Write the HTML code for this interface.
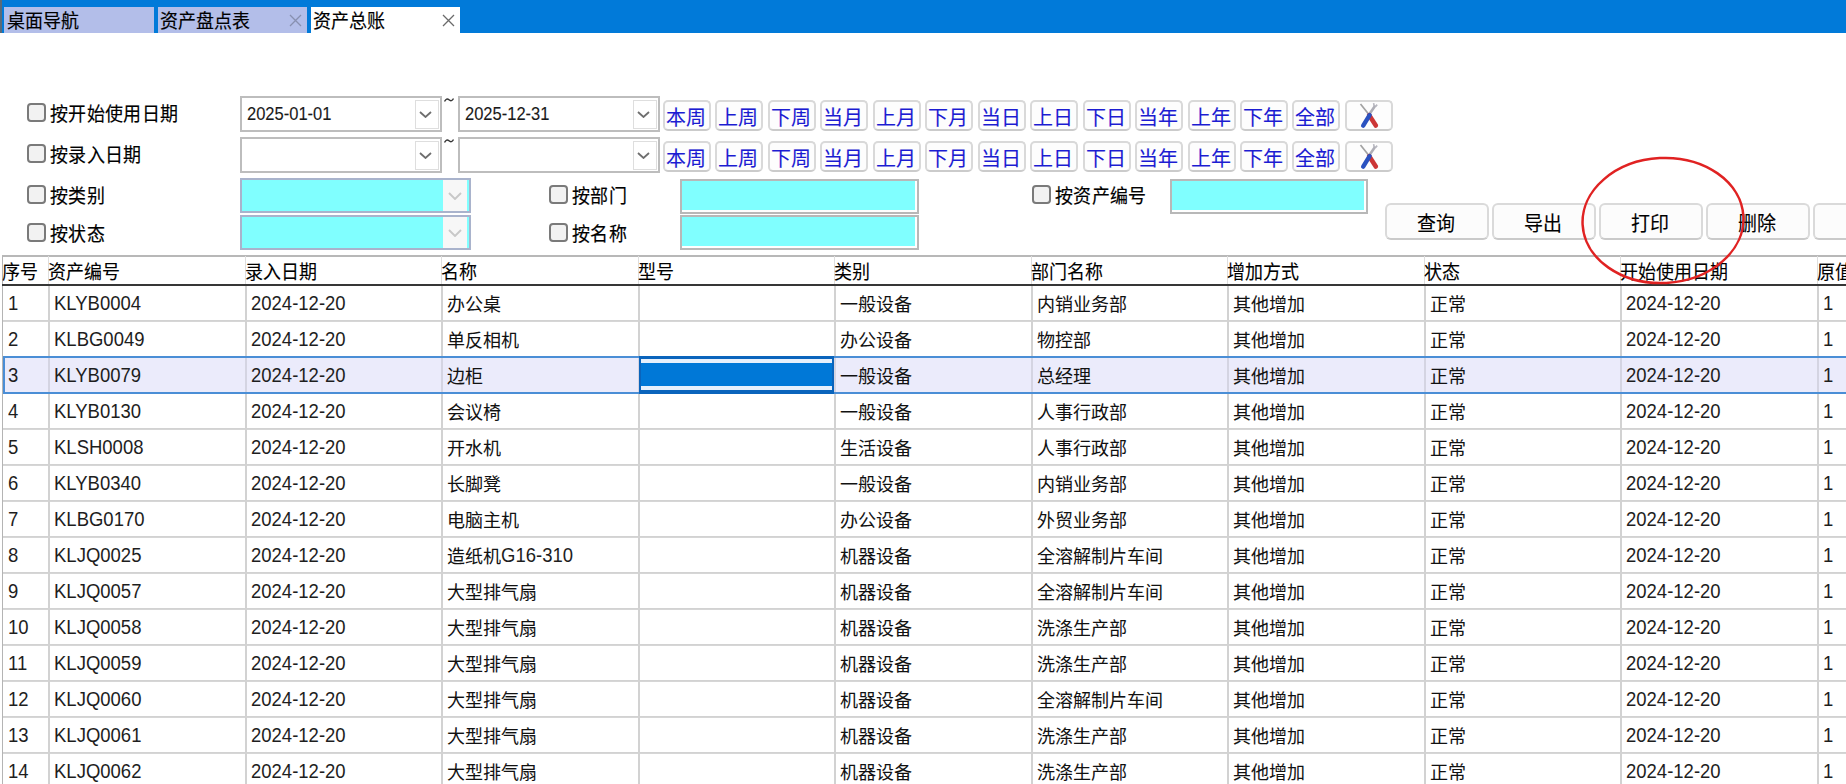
<!DOCTYPE html><html lang="zh-CN"><head><meta charset="utf-8"><style>
*{box-sizing:border-box}
html,body{margin:0;padding:0}
body{width:1846px;height:784px;overflow:hidden;background:#fff;position:relative;
 font-family:"Liberation Sans",sans-serif;font-size:18px;color:#000}
.a{position:absolute}
.t{position:absolute;white-space:nowrap;line-height:20px;height:20px}
.cb{position:absolute;width:19px;height:19px;border:2px solid #7a7a7a;border-radius:4px;background:#f2f2f2}
.combo{position:absolute;height:36px;border:2px solid #bdbdbd;background:#fff}
.dd{position:absolute;border:1px solid #dedede;background:#fff}
.btn{position:absolute;width:48px;height:31px;border:2px solid #d9d9d9;border-bottom-color:#cbcbcb;border-radius:5px;background:#fdfdfd}
.qb{position:absolute;width:104px;height:37px;border:2px solid #dadada;border-bottom-color:#cacaca;border-radius:6px;background:#fcfcfc}
.hl{position:absolute;height:1px;background:#d2d2d2}
.hl2{position:absolute;height:1px;background:#d6d6d6}
.vl{position:absolute;width:2px;background:#d2d2d2}
</style></head><body>
<div class="a" style="left:0;top:0;width:1846px;height:33px;background:#017ad9"></div>
<div class="a" style="left:0;top:0;width:2px;height:33px;background:#5a6a78"></div>
<div class="a" style="left:4px;top:7px;width:150px;height:26px;background:#b3bee9"></div>
<div class="a" style="left:158px;top:7px;width:149px;height:26px;background:#b3bee9"></div>
<div class="a" style="left:311px;top:7px;width:149px;height:26px;background:#fff"></div>
<div class="t" style="left:7px;top:11px;font-size:18px;transform:scaleY(1.06);transform-origin:0 0;-webkit-text-stroke:0.15px currentColor">桌面导航</div>
<div class="t" style="left:160px;top:11px;font-size:18px;transform:scaleY(1.06);transform-origin:0 0;-webkit-text-stroke:0.15px currentColor">资产盘点表</div>
<div class="t" style="left:313px;top:11px;font-size:18px;transform:scaleY(1.06);transform-origin:0 0;-webkit-text-stroke:0.15px currentColor">资产总账</div>
<svg class="a" style="left:289px;top:14px" width="13" height="13" viewBox="0 0 13 13"><path d="M1 1L12 12M12 1L1 12" stroke="#8890b0" stroke-width="1.3" fill="none"/></svg>
<svg class="a" style="left:442px;top:14px" width="13" height="13" viewBox="0 0 13 13"><path d="M1 1L12 12M12 1L1 12" stroke="#6a6a6a" stroke-width="1.3" fill="none"/></svg>
<div class="cb" style="left:27px;top:103px"></div>
<div class="t" style="left:50px;top:103px;font-size:18px;transform:scaleY(1.1);transform-origin:0 0;letter-spacing:0.35px;-webkit-text-stroke:0.15px currentColor">按开始使用日期</div>
<div class="cb" style="left:27px;top:144px"></div>
<div class="t" style="left:50px;top:144px;font-size:18px;transform:scaleY(1.1);transform-origin:0 0;letter-spacing:0.35px;-webkit-text-stroke:0.15px currentColor">按录入日期</div>
<div class="cb" style="left:27px;top:185px"></div>
<div class="t" style="left:50px;top:185px;font-size:18px;transform:scaleY(1.1);transform-origin:0 0;letter-spacing:0.35px;-webkit-text-stroke:0.15px currentColor">按类别</div>
<div class="cb" style="left:27px;top:223px"></div>
<div class="t" style="left:50px;top:223px;font-size:18px;transform:scaleY(1.1);transform-origin:0 0;letter-spacing:0.35px;-webkit-text-stroke:0.15px currentColor">按状态</div>
<div class="cb" style="left:549px;top:185px"></div>
<div class="t" style="left:572px;top:185px;font-size:18px;transform:scaleY(1.1);transform-origin:0 0;letter-spacing:0.35px;-webkit-text-stroke:0.15px currentColor">按部门</div>
<div class="cb" style="left:549px;top:223px"></div>
<div class="t" style="left:572px;top:223px;font-size:18px;transform:scaleY(1.1);transform-origin:0 0;letter-spacing:0.35px;-webkit-text-stroke:0.15px currentColor">按名称</div>
<div class="cb" style="left:1032px;top:185px"></div>
<div class="t" style="left:1055px;top:185px;font-size:18px;transform:scaleY(1.1);transform-origin:0 0;letter-spacing:0.35px;-webkit-text-stroke:0.15px currentColor">按资产编号</div>
<div class="combo" style="left:240px;top:96px;width:202px"></div>
<div class="dd" style="left:415px;top:100px;width:24px;height:29px"></div>
<svg class="a" style="left:419px;top:111px" width="13" height="7" viewBox="0 0 13 7"><path d="M1 1L6.5 6L12 1" stroke="#6e6e6e" stroke-width="1.8" fill="none"/></svg>
<div class="t" style="left:247px;top:102px;font-size:16.5px;transform:scaleY(1.1);transform-origin:0 0;-webkit-text-stroke:0.1px currentColor;color:#1a1a1a">2025-01-01</div>
<div class="combo" style="left:458px;top:96px;width:202px"></div>
<div class="dd" style="left:633px;top:100px;width:24px;height:29px"></div>
<svg class="a" style="left:637px;top:111px" width="13" height="7" viewBox="0 0 13 7"><path d="M1 1L6.5 6L12 1" stroke="#6e6e6e" stroke-width="1.8" fill="none"/></svg>
<div class="t" style="left:465px;top:102px;font-size:16.5px;transform:scaleY(1.1);transform-origin:0 0;-webkit-text-stroke:0.1px currentColor;color:#1a1a1a">2025-12-31</div>
<svg class="a" style="left:444px;top:97px" width="10" height="6" viewBox="0 0 10 6"><path d="M0.5 4.5Q2.5 0.5 5 2.8T9.5 1.5" stroke="#333" stroke-width="1.4" fill="none"/></svg>
<div class="combo" style="left:240px;top:137px;width:202px"></div>
<div class="dd" style="left:415px;top:141px;width:24px;height:29px"></div>
<svg class="a" style="left:419px;top:152px" width="13" height="7" viewBox="0 0 13 7"><path d="M1 1L6.5 6L12 1" stroke="#6e6e6e" stroke-width="1.8" fill="none"/></svg>
<div class="combo" style="left:458px;top:137px;width:202px"></div>
<div class="dd" style="left:633px;top:141px;width:24px;height:29px"></div>
<svg class="a" style="left:637px;top:152px" width="13" height="7" viewBox="0 0 13 7"><path d="M1 1L6.5 6L12 1" stroke="#6e6e6e" stroke-width="1.8" fill="none"/></svg>
<svg class="a" style="left:444px;top:138px" width="10" height="6" viewBox="0 0 10 6"><path d="M0.5 4.5Q2.5 0.5 5 2.8T9.5 1.5" stroke="#333" stroke-width="1.4" fill="none"/></svg>
<div class="btn" style="left:663px;top:100px"></div>
<div class="t" style="left:666px;top:108px;font-size:20px;-webkit-text-stroke:0.1px currentColor;color:#1c1cd2">本周</div>
<div class="btn" style="left:715px;top:100px"></div>
<div class="t" style="left:718px;top:108px;font-size:20px;-webkit-text-stroke:0.1px currentColor;color:#1c1cd2">上周</div>
<div class="btn" style="left:768px;top:100px"></div>
<div class="t" style="left:771px;top:108px;font-size:20px;-webkit-text-stroke:0.1px currentColor;color:#1c1cd2">下周</div>
<div class="btn" style="left:820px;top:100px"></div>
<div class="t" style="left:823px;top:108px;font-size:20px;-webkit-text-stroke:0.1px currentColor;color:#1c1cd2">当月</div>
<div class="btn" style="left:873px;top:100px"></div>
<div class="t" style="left:876px;top:108px;font-size:20px;-webkit-text-stroke:0.1px currentColor;color:#1c1cd2">上月</div>
<div class="btn" style="left:925px;top:100px"></div>
<div class="t" style="left:928px;top:108px;font-size:20px;-webkit-text-stroke:0.1px currentColor;color:#1c1cd2">下月</div>
<div class="btn" style="left:978px;top:100px"></div>
<div class="t" style="left:981px;top:108px;font-size:20px;-webkit-text-stroke:0.1px currentColor;color:#1c1cd2">当日</div>
<div class="btn" style="left:1030px;top:100px"></div>
<div class="t" style="left:1033px;top:108px;font-size:20px;-webkit-text-stroke:0.1px currentColor;color:#1c1cd2">上日</div>
<div class="btn" style="left:1083px;top:100px"></div>
<div class="t" style="left:1086px;top:108px;font-size:20px;-webkit-text-stroke:0.1px currentColor;color:#1c1cd2">下日</div>
<div class="btn" style="left:1135px;top:100px"></div>
<div class="t" style="left:1138px;top:108px;font-size:20px;-webkit-text-stroke:0.1px currentColor;color:#1c1cd2">当年</div>
<div class="btn" style="left:1188px;top:100px"></div>
<div class="t" style="left:1191px;top:108px;font-size:20px;-webkit-text-stroke:0.1px currentColor;color:#1c1cd2">上年</div>
<div class="btn" style="left:1240px;top:100px"></div>
<div class="t" style="left:1243px;top:108px;font-size:20px;-webkit-text-stroke:0.1px currentColor;color:#1c1cd2">下年</div>
<div class="btn" style="left:1292px;top:100px"></div>
<div class="t" style="left:1295px;top:108px;font-size:20px;-webkit-text-stroke:0.1px currentColor;color:#1c1cd2">全部</div>
<div class="btn" style="left:1345px;top:100px"></div>
<svg class="a" style="left:1359px;top:102px" width="22" height="27" viewBox="0 0 22 27">
<path d="M1.5 2 L9.5 12" stroke="#a2a2a2" stroke-width="1.7" fill="none"/>
<path d="M16.3 3.5 L10.5 12" stroke="#aeaeb6" stroke-width="2.6" fill="none"/>
<path d="M14.6 1.2 L15.2 4.2 M18.2 2.6 L16.4 4.6" stroke="#b8b8c0" stroke-width="1.6" fill="none"/>
<path d="M10.2 13.2 L16.8 23.6" stroke="#cc3636" stroke-width="4.6" stroke-linecap="round" fill="none"/>
<path d="M10.6 13.2 L4.2 23.6" stroke="#2a52c0" stroke-width="4.4" stroke-linecap="round" fill="none"/>
</svg>
<div class="btn" style="left:663px;top:141px"></div>
<div class="t" style="left:666px;top:149px;font-size:20px;-webkit-text-stroke:0.1px currentColor;color:#1c1cd2">本周</div>
<div class="btn" style="left:715px;top:141px"></div>
<div class="t" style="left:718px;top:149px;font-size:20px;-webkit-text-stroke:0.1px currentColor;color:#1c1cd2">上周</div>
<div class="btn" style="left:768px;top:141px"></div>
<div class="t" style="left:771px;top:149px;font-size:20px;-webkit-text-stroke:0.1px currentColor;color:#1c1cd2">下周</div>
<div class="btn" style="left:820px;top:141px"></div>
<div class="t" style="left:823px;top:149px;font-size:20px;-webkit-text-stroke:0.1px currentColor;color:#1c1cd2">当月</div>
<div class="btn" style="left:873px;top:141px"></div>
<div class="t" style="left:876px;top:149px;font-size:20px;-webkit-text-stroke:0.1px currentColor;color:#1c1cd2">上月</div>
<div class="btn" style="left:925px;top:141px"></div>
<div class="t" style="left:928px;top:149px;font-size:20px;-webkit-text-stroke:0.1px currentColor;color:#1c1cd2">下月</div>
<div class="btn" style="left:978px;top:141px"></div>
<div class="t" style="left:981px;top:149px;font-size:20px;-webkit-text-stroke:0.1px currentColor;color:#1c1cd2">当日</div>
<div class="btn" style="left:1030px;top:141px"></div>
<div class="t" style="left:1033px;top:149px;font-size:20px;-webkit-text-stroke:0.1px currentColor;color:#1c1cd2">上日</div>
<div class="btn" style="left:1083px;top:141px"></div>
<div class="t" style="left:1086px;top:149px;font-size:20px;-webkit-text-stroke:0.1px currentColor;color:#1c1cd2">下日</div>
<div class="btn" style="left:1135px;top:141px"></div>
<div class="t" style="left:1138px;top:149px;font-size:20px;-webkit-text-stroke:0.1px currentColor;color:#1c1cd2">当年</div>
<div class="btn" style="left:1188px;top:141px"></div>
<div class="t" style="left:1191px;top:149px;font-size:20px;-webkit-text-stroke:0.1px currentColor;color:#1c1cd2">上年</div>
<div class="btn" style="left:1240px;top:141px"></div>
<div class="t" style="left:1243px;top:149px;font-size:20px;-webkit-text-stroke:0.1px currentColor;color:#1c1cd2">下年</div>
<div class="btn" style="left:1292px;top:141px"></div>
<div class="t" style="left:1295px;top:149px;font-size:20px;-webkit-text-stroke:0.1px currentColor;color:#1c1cd2">全部</div>
<div class="btn" style="left:1345px;top:141px"></div>
<svg class="a" style="left:1359px;top:143px" width="22" height="27" viewBox="0 0 22 27">
<path d="M1.5 2 L9.5 12" stroke="#a2a2a2" stroke-width="1.7" fill="none"/>
<path d="M16.3 3.5 L10.5 12" stroke="#aeaeb6" stroke-width="2.6" fill="none"/>
<path d="M14.6 1.2 L15.2 4.2 M18.2 2.6 L16.4 4.6" stroke="#b8b8c0" stroke-width="1.6" fill="none"/>
<path d="M10.2 13.2 L16.8 23.6" stroke="#cc3636" stroke-width="4.6" stroke-linecap="round" fill="none"/>
<path d="M10.6 13.2 L4.2 23.6" stroke="#2a52c0" stroke-width="4.4" stroke-linecap="round" fill="none"/>
</svg>
<div class="a" style="left:240px;top:178px;width:231px;height:35px;border:2px solid #a9b3cc;background:#80ffff"></div>
<div class="a" style="left:443px;top:180px;width:24px;height:31px;background:#f7f7f7"></div>
<svg class="a" style="left:448px;top:192px" width="14" height="8" viewBox="0 0 14 8"><path d="M1 1L7.0 7L13 1" stroke="#c8c8c8" stroke-width="1.9" fill="none"/></svg>
<div class="a" style="left:240px;top:215px;width:231px;height:35px;border:2px solid #a9b3cc;background:#80ffff"></div>
<div class="a" style="left:443px;top:217px;width:24px;height:31px;background:#f7f7f7"></div>
<svg class="a" style="left:448px;top:229px" width="14" height="8" viewBox="0 0 14 8"><path d="M1 1L7.0 7L13 1" stroke="#c8c8c8" stroke-width="1.9" fill="none"/></svg>
<div class="a" style="left:680px;top:179px;width:239px;height:35px;border:2px solid #b8b8b8"><div class="a" style="left:0;top:0;right:2px;bottom:2px;background:#80ffff"></div></div>
<div class="a" style="left:680px;top:215px;width:239px;height:35px;border:2px solid #b8b8b8"><div class="a" style="left:0;top:0;right:2px;bottom:2px;background:#80ffff"></div></div>
<div class="a" style="left:1170px;top:179px;width:198px;height:35px;border:2px solid #b8b8b8"><div class="a" style="left:0;top:0;right:2px;bottom:2px;background:#80ffff"></div></div>
<div class="qb" style="left:1385px;top:203px"></div>
<div class="t" style="left:1417px;top:214px;font-size:19px;transform:scaleY(1.06);transform-origin:0 0;-webkit-text-stroke:0.1px currentColor">查询</div>
<div class="qb" style="left:1492px;top:203px"></div>
<div class="t" style="left:1524px;top:214px;font-size:19px;transform:scaleY(1.06);transform-origin:0 0;-webkit-text-stroke:0.1px currentColor">导出</div>
<div class="qb" style="left:1599px;top:203px"></div>
<div class="t" style="left:1631px;top:214px;font-size:19px;transform:scaleY(1.06);transform-origin:0 0;-webkit-text-stroke:0.1px currentColor">打印</div>
<div class="qb" style="left:1706px;top:203px"></div>
<div class="t" style="left:1738px;top:214px;font-size:19px;transform:scaleY(1.06);transform-origin:0 0;-webkit-text-stroke:0.1px currentColor">删除</div>
<div class="qb" style="left:1813px;top:203px"></div>
<div class="a" style="left:2px;top:255px;width:1844px;height:2px;background:#b8b8b8"></div>
<div class="a" style="left:2px;top:256px;width:1px;height:528px;background:#b4b4b4"></div>
<div class="a" style="left:48px;top:256px;width:1px;height:28px;background:#dedede"></div>
<div class="a" style="left:245px;top:256px;width:1px;height:28px;background:#dedede"></div>
<div class="a" style="left:441px;top:256px;width:1px;height:28px;background:#dedede"></div>
<div class="a" style="left:638px;top:256px;width:1px;height:28px;background:#dedede"></div>
<div class="a" style="left:834px;top:256px;width:1px;height:28px;background:#dedede"></div>
<div class="a" style="left:1031px;top:256px;width:1px;height:28px;background:#dedede"></div>
<div class="a" style="left:1227px;top:256px;width:1px;height:28px;background:#dedede"></div>
<div class="a" style="left:1424px;top:256px;width:1px;height:28px;background:#dedede"></div>
<div class="a" style="left:1620px;top:256px;width:1px;height:28px;background:#dedede"></div>
<div class="a" style="left:1817px;top:256px;width:1px;height:28px;background:#dedede"></div>
<div class="t" style="left:2px;top:262px;font-size:18px;transform:scaleY(1.06);transform-origin:0 0;-webkit-text-stroke:0.1px currentColor">序号</div>
<div class="t" style="left:48px;top:262px;font-size:18px;transform:scaleY(1.06);transform-origin:0 0;-webkit-text-stroke:0.1px currentColor">资产编号</div>
<div class="t" style="left:245px;top:262px;font-size:18px;transform:scaleY(1.06);transform-origin:0 0;-webkit-text-stroke:0.1px currentColor">录入日期</div>
<div class="t" style="left:441px;top:262px;font-size:18px;transform:scaleY(1.06);transform-origin:0 0;-webkit-text-stroke:0.1px currentColor">名称</div>
<div class="t" style="left:638px;top:262px;font-size:18px;transform:scaleY(1.06);transform-origin:0 0;-webkit-text-stroke:0.1px currentColor">型号</div>
<div class="t" style="left:834px;top:262px;font-size:18px;transform:scaleY(1.06);transform-origin:0 0;-webkit-text-stroke:0.1px currentColor">类别</div>
<div class="t" style="left:1031px;top:262px;font-size:18px;transform:scaleY(1.06);transform-origin:0 0;-webkit-text-stroke:0.1px currentColor">部门名称</div>
<div class="t" style="left:1227px;top:262px;font-size:18px;transform:scaleY(1.06);transform-origin:0 0;-webkit-text-stroke:0.1px currentColor">增加方式</div>
<div class="t" style="left:1424px;top:262px;font-size:18px;transform:scaleY(1.06);transform-origin:0 0;-webkit-text-stroke:0.1px currentColor">状态</div>
<div class="t" style="left:1620px;top:262px;font-size:18px;transform:scaleY(1.06);transform-origin:0 0;-webkit-text-stroke:0.1px currentColor">开始使用日期</div>
<div class="t" style="left:1817px;top:262px;font-size:18px;transform:scaleY(1.06);transform-origin:0 0;-webkit-text-stroke:0.1px currentColor">原值</div>
<div class="a" style="left:2px;top:284px;width:1844px;height:2px;background:#363636"></div>
<div class="hl" style="left:3px;top:320px;width:1843px"></div>
<div class="hl2" style="left:3px;top:321px;width:1843px"></div>
<div class="hl" style="left:3px;top:356px;width:1843px"></div>
<div class="hl2" style="left:3px;top:357px;width:1843px"></div>
<div class="hl" style="left:3px;top:392px;width:1843px"></div>
<div class="hl2" style="left:3px;top:393px;width:1843px"></div>
<div class="hl" style="left:3px;top:428px;width:1843px"></div>
<div class="hl2" style="left:3px;top:429px;width:1843px"></div>
<div class="hl" style="left:3px;top:464px;width:1843px"></div>
<div class="hl2" style="left:3px;top:465px;width:1843px"></div>
<div class="hl" style="left:3px;top:500px;width:1843px"></div>
<div class="hl2" style="left:3px;top:501px;width:1843px"></div>
<div class="hl" style="left:3px;top:536px;width:1843px"></div>
<div class="hl2" style="left:3px;top:537px;width:1843px"></div>
<div class="hl" style="left:3px;top:572px;width:1843px"></div>
<div class="hl2" style="left:3px;top:573px;width:1843px"></div>
<div class="hl" style="left:3px;top:608px;width:1843px"></div>
<div class="hl2" style="left:3px;top:609px;width:1843px"></div>
<div class="hl" style="left:3px;top:644px;width:1843px"></div>
<div class="hl2" style="left:3px;top:645px;width:1843px"></div>
<div class="hl" style="left:3px;top:680px;width:1843px"></div>
<div class="hl2" style="left:3px;top:681px;width:1843px"></div>
<div class="hl" style="left:3px;top:716px;width:1843px"></div>
<div class="hl2" style="left:3px;top:717px;width:1843px"></div>
<div class="hl" style="left:3px;top:752px;width:1843px"></div>
<div class="hl2" style="left:3px;top:753px;width:1843px"></div>
<div class="hl" style="left:3px;top:788px;width:1843px"></div>
<div class="hl2" style="left:3px;top:789px;width:1843px"></div>
<div class="vl" style="left:48px;top:286px;height:498px"></div>
<div class="vl" style="left:245px;top:286px;height:498px"></div>
<div class="vl" style="left:441px;top:286px;height:498px"></div>
<div class="vl" style="left:638px;top:286px;height:498px"></div>
<div class="vl" style="left:834px;top:286px;height:498px"></div>
<div class="vl" style="left:1031px;top:286px;height:498px"></div>
<div class="vl" style="left:1227px;top:286px;height:498px"></div>
<div class="vl" style="left:1424px;top:286px;height:498px"></div>
<div class="vl" style="left:1620px;top:286px;height:498px"></div>
<div class="vl" style="left:1817px;top:286px;height:498px"></div>
<div class="a" style="left:3px;top:356px;width:1843px;height:38px;border:2px solid #4a8ed6;border-right:none;background:#ebebfb"></div>
<div class="vl" style="left:48px;top:358px;height:34px;background:#d4d4e2"></div>
<div class="vl" style="left:245px;top:358px;height:34px;background:#d4d4e2"></div>
<div class="vl" style="left:441px;top:358px;height:34px;background:#d4d4e2"></div>
<div class="vl" style="left:638px;top:358px;height:34px;background:#d4d4e2"></div>
<div class="vl" style="left:834px;top:358px;height:34px;background:#d4d4e2"></div>
<div class="vl" style="left:1031px;top:358px;height:34px;background:#d4d4e2"></div>
<div class="vl" style="left:1227px;top:358px;height:34px;background:#d4d4e2"></div>
<div class="vl" style="left:1424px;top:358px;height:34px;background:#d4d4e2"></div>
<div class="vl" style="left:1620px;top:358px;height:34px;background:#d4d4e2"></div>
<div class="vl" style="left:1817px;top:358px;height:34px;background:#d4d4e2"></div>
<div class="a" style="left:639px;top:356px;width:195px;height:38px;background:#0a64bc"><div class="a" style="left:2px;top:3px;right:2px;bottom:4px;background:#e6f0fc"></div><div class="a" style="left:2px;top:7px;right:2px;bottom:8px;background:#0078d7"></div></div>
<div class="t" style="left:8px;top:293px;font-size:18.5px;transform:scaleY(1.05);transform-origin:0 0;color:#1e1e1e">1</div>
<div class="t" style="left:54px;top:293px;font-size:18.5px;transform:scaleY(1.05);transform-origin:0 0;color:#1e1e1e">KLYB0004</div>
<div class="t" style="left:251px;top:293px;font-size:18.5px;transform:scaleY(1.05);transform-origin:0 0;color:#1e1e1e">2024-12-20</div>
<div class="t" style="left:447px;top:295px;font-size:18px;-webkit-text-stroke:0.05px currentColor;color:#111">办公桌</div>
<div class="t" style="left:840px;top:295px;font-size:18px;-webkit-text-stroke:0.05px currentColor;color:#111">一般设备</div>
<div class="t" style="left:1037px;top:295px;font-size:18px;-webkit-text-stroke:0.05px currentColor;color:#111">内销业务部</div>
<div class="t" style="left:1233px;top:295px;font-size:18px;-webkit-text-stroke:0.05px currentColor;color:#111">其他增加</div>
<div class="t" style="left:1430px;top:295px;font-size:18px;-webkit-text-stroke:0.05px currentColor;color:#111">正常</div>
<div class="t" style="left:1626px;top:293px;font-size:18.5px;transform:scaleY(1.05);transform-origin:0 0;color:#1e1e1e">2024-12-20</div>
<div class="t" style="left:1823px;top:293px;font-size:18.5px;transform:scaleY(1.05);transform-origin:0 0;color:#1e1e1e">1</div>
<div class="t" style="left:8px;top:329px;font-size:18.5px;transform:scaleY(1.05);transform-origin:0 0;color:#1e1e1e">2</div>
<div class="t" style="left:54px;top:329px;font-size:18.5px;transform:scaleY(1.05);transform-origin:0 0;color:#1e1e1e">KLBG0049</div>
<div class="t" style="left:251px;top:329px;font-size:18.5px;transform:scaleY(1.05);transform-origin:0 0;color:#1e1e1e">2024-12-20</div>
<div class="t" style="left:447px;top:331px;font-size:18px;-webkit-text-stroke:0.05px currentColor;color:#111">单反相机</div>
<div class="t" style="left:840px;top:331px;font-size:18px;-webkit-text-stroke:0.05px currentColor;color:#111">办公设备</div>
<div class="t" style="left:1037px;top:331px;font-size:18px;-webkit-text-stroke:0.05px currentColor;color:#111">物控部</div>
<div class="t" style="left:1233px;top:331px;font-size:18px;-webkit-text-stroke:0.05px currentColor;color:#111">其他增加</div>
<div class="t" style="left:1430px;top:331px;font-size:18px;-webkit-text-stroke:0.05px currentColor;color:#111">正常</div>
<div class="t" style="left:1626px;top:329px;font-size:18.5px;transform:scaleY(1.05);transform-origin:0 0;color:#1e1e1e">2024-12-20</div>
<div class="t" style="left:1823px;top:329px;font-size:18.5px;transform:scaleY(1.05);transform-origin:0 0;color:#1e1e1e">1</div>
<div class="t" style="left:8px;top:365px;font-size:18.5px;transform:scaleY(1.05);transform-origin:0 0;color:#1e1e1e">3</div>
<div class="t" style="left:54px;top:365px;font-size:18.5px;transform:scaleY(1.05);transform-origin:0 0;color:#1e1e1e">KLYB0079</div>
<div class="t" style="left:251px;top:365px;font-size:18.5px;transform:scaleY(1.05);transform-origin:0 0;color:#1e1e1e">2024-12-20</div>
<div class="t" style="left:447px;top:367px;font-size:18px;-webkit-text-stroke:0.05px currentColor;color:#111">边柜</div>
<div class="t" style="left:840px;top:367px;font-size:18px;-webkit-text-stroke:0.05px currentColor;color:#111">一般设备</div>
<div class="t" style="left:1037px;top:367px;font-size:18px;-webkit-text-stroke:0.05px currentColor;color:#111">总经理</div>
<div class="t" style="left:1233px;top:367px;font-size:18px;-webkit-text-stroke:0.05px currentColor;color:#111">其他增加</div>
<div class="t" style="left:1430px;top:367px;font-size:18px;-webkit-text-stroke:0.05px currentColor;color:#111">正常</div>
<div class="t" style="left:1626px;top:365px;font-size:18.5px;transform:scaleY(1.05);transform-origin:0 0;color:#1e1e1e">2024-12-20</div>
<div class="t" style="left:1823px;top:365px;font-size:18.5px;transform:scaleY(1.05);transform-origin:0 0;color:#1e1e1e">1</div>
<div class="t" style="left:8px;top:401px;font-size:18.5px;transform:scaleY(1.05);transform-origin:0 0;color:#1e1e1e">4</div>
<div class="t" style="left:54px;top:401px;font-size:18.5px;transform:scaleY(1.05);transform-origin:0 0;color:#1e1e1e">KLYB0130</div>
<div class="t" style="left:251px;top:401px;font-size:18.5px;transform:scaleY(1.05);transform-origin:0 0;color:#1e1e1e">2024-12-20</div>
<div class="t" style="left:447px;top:403px;font-size:18px;-webkit-text-stroke:0.05px currentColor;color:#111">会议椅</div>
<div class="t" style="left:840px;top:403px;font-size:18px;-webkit-text-stroke:0.05px currentColor;color:#111">一般设备</div>
<div class="t" style="left:1037px;top:403px;font-size:18px;-webkit-text-stroke:0.05px currentColor;color:#111">人事行政部</div>
<div class="t" style="left:1233px;top:403px;font-size:18px;-webkit-text-stroke:0.05px currentColor;color:#111">其他增加</div>
<div class="t" style="left:1430px;top:403px;font-size:18px;-webkit-text-stroke:0.05px currentColor;color:#111">正常</div>
<div class="t" style="left:1626px;top:401px;font-size:18.5px;transform:scaleY(1.05);transform-origin:0 0;color:#1e1e1e">2024-12-20</div>
<div class="t" style="left:1823px;top:401px;font-size:18.5px;transform:scaleY(1.05);transform-origin:0 0;color:#1e1e1e">1</div>
<div class="t" style="left:8px;top:437px;font-size:18.5px;transform:scaleY(1.05);transform-origin:0 0;color:#1e1e1e">5</div>
<div class="t" style="left:54px;top:437px;font-size:18.5px;transform:scaleY(1.05);transform-origin:0 0;color:#1e1e1e">KLSH0008</div>
<div class="t" style="left:251px;top:437px;font-size:18.5px;transform:scaleY(1.05);transform-origin:0 0;color:#1e1e1e">2024-12-20</div>
<div class="t" style="left:447px;top:439px;font-size:18px;-webkit-text-stroke:0.05px currentColor;color:#111">开水机</div>
<div class="t" style="left:840px;top:439px;font-size:18px;-webkit-text-stroke:0.05px currentColor;color:#111">生活设备</div>
<div class="t" style="left:1037px;top:439px;font-size:18px;-webkit-text-stroke:0.05px currentColor;color:#111">人事行政部</div>
<div class="t" style="left:1233px;top:439px;font-size:18px;-webkit-text-stroke:0.05px currentColor;color:#111">其他增加</div>
<div class="t" style="left:1430px;top:439px;font-size:18px;-webkit-text-stroke:0.05px currentColor;color:#111">正常</div>
<div class="t" style="left:1626px;top:437px;font-size:18.5px;transform:scaleY(1.05);transform-origin:0 0;color:#1e1e1e">2024-12-20</div>
<div class="t" style="left:1823px;top:437px;font-size:18.5px;transform:scaleY(1.05);transform-origin:0 0;color:#1e1e1e">1</div>
<div class="t" style="left:8px;top:473px;font-size:18.5px;transform:scaleY(1.05);transform-origin:0 0;color:#1e1e1e">6</div>
<div class="t" style="left:54px;top:473px;font-size:18.5px;transform:scaleY(1.05);transform-origin:0 0;color:#1e1e1e">KLYB0340</div>
<div class="t" style="left:251px;top:473px;font-size:18.5px;transform:scaleY(1.05);transform-origin:0 0;color:#1e1e1e">2024-12-20</div>
<div class="t" style="left:447px;top:475px;font-size:18px;-webkit-text-stroke:0.05px currentColor;color:#111">长脚凳</div>
<div class="t" style="left:840px;top:475px;font-size:18px;-webkit-text-stroke:0.05px currentColor;color:#111">一般设备</div>
<div class="t" style="left:1037px;top:475px;font-size:18px;-webkit-text-stroke:0.05px currentColor;color:#111">内销业务部</div>
<div class="t" style="left:1233px;top:475px;font-size:18px;-webkit-text-stroke:0.05px currentColor;color:#111">其他增加</div>
<div class="t" style="left:1430px;top:475px;font-size:18px;-webkit-text-stroke:0.05px currentColor;color:#111">正常</div>
<div class="t" style="left:1626px;top:473px;font-size:18.5px;transform:scaleY(1.05);transform-origin:0 0;color:#1e1e1e">2024-12-20</div>
<div class="t" style="left:1823px;top:473px;font-size:18.5px;transform:scaleY(1.05);transform-origin:0 0;color:#1e1e1e">1</div>
<div class="t" style="left:8px;top:509px;font-size:18.5px;transform:scaleY(1.05);transform-origin:0 0;color:#1e1e1e">7</div>
<div class="t" style="left:54px;top:509px;font-size:18.5px;transform:scaleY(1.05);transform-origin:0 0;color:#1e1e1e">KLBG0170</div>
<div class="t" style="left:251px;top:509px;font-size:18.5px;transform:scaleY(1.05);transform-origin:0 0;color:#1e1e1e">2024-12-20</div>
<div class="t" style="left:447px;top:511px;font-size:18px;-webkit-text-stroke:0.05px currentColor;color:#111">电脑主机</div>
<div class="t" style="left:840px;top:511px;font-size:18px;-webkit-text-stroke:0.05px currentColor;color:#111">办公设备</div>
<div class="t" style="left:1037px;top:511px;font-size:18px;-webkit-text-stroke:0.05px currentColor;color:#111">外贸业务部</div>
<div class="t" style="left:1233px;top:511px;font-size:18px;-webkit-text-stroke:0.05px currentColor;color:#111">其他增加</div>
<div class="t" style="left:1430px;top:511px;font-size:18px;-webkit-text-stroke:0.05px currentColor;color:#111">正常</div>
<div class="t" style="left:1626px;top:509px;font-size:18.5px;transform:scaleY(1.05);transform-origin:0 0;color:#1e1e1e">2024-12-20</div>
<div class="t" style="left:1823px;top:509px;font-size:18.5px;transform:scaleY(1.05);transform-origin:0 0;color:#1e1e1e">1</div>
<div class="t" style="left:8px;top:545px;font-size:18.5px;transform:scaleY(1.05);transform-origin:0 0;color:#1e1e1e">8</div>
<div class="t" style="left:54px;top:545px;font-size:18.5px;transform:scaleY(1.05);transform-origin:0 0;color:#1e1e1e">KLJQ0025</div>
<div class="t" style="left:251px;top:545px;font-size:18.5px;transform:scaleY(1.05);transform-origin:0 0;color:#1e1e1e">2024-12-20</div>
<div class="t" style="left:447px;top:547px;font-size:18px;-webkit-text-stroke:0.05px currentColor;color:#111">造纸机</div>
<div class="t" style="left:501px;top:545px;font-size:18.5px;transform:scaleY(1.05);transform-origin:0 0;color:#1e1e1e">G16-310</div>
<div class="t" style="left:840px;top:547px;font-size:18px;-webkit-text-stroke:0.05px currentColor;color:#111">机器设备</div>
<div class="t" style="left:1037px;top:547px;font-size:18px;-webkit-text-stroke:0.05px currentColor;color:#111">全溶解制片车间</div>
<div class="t" style="left:1233px;top:547px;font-size:18px;-webkit-text-stroke:0.05px currentColor;color:#111">其他增加</div>
<div class="t" style="left:1430px;top:547px;font-size:18px;-webkit-text-stroke:0.05px currentColor;color:#111">正常</div>
<div class="t" style="left:1626px;top:545px;font-size:18.5px;transform:scaleY(1.05);transform-origin:0 0;color:#1e1e1e">2024-12-20</div>
<div class="t" style="left:1823px;top:545px;font-size:18.5px;transform:scaleY(1.05);transform-origin:0 0;color:#1e1e1e">1</div>
<div class="t" style="left:8px;top:581px;font-size:18.5px;transform:scaleY(1.05);transform-origin:0 0;color:#1e1e1e">9</div>
<div class="t" style="left:54px;top:581px;font-size:18.5px;transform:scaleY(1.05);transform-origin:0 0;color:#1e1e1e">KLJQ0057</div>
<div class="t" style="left:251px;top:581px;font-size:18.5px;transform:scaleY(1.05);transform-origin:0 0;color:#1e1e1e">2024-12-20</div>
<div class="t" style="left:447px;top:583px;font-size:18px;-webkit-text-stroke:0.05px currentColor;color:#111">大型排气扇</div>
<div class="t" style="left:840px;top:583px;font-size:18px;-webkit-text-stroke:0.05px currentColor;color:#111">机器设备</div>
<div class="t" style="left:1037px;top:583px;font-size:18px;-webkit-text-stroke:0.05px currentColor;color:#111">全溶解制片车间</div>
<div class="t" style="left:1233px;top:583px;font-size:18px;-webkit-text-stroke:0.05px currentColor;color:#111">其他增加</div>
<div class="t" style="left:1430px;top:583px;font-size:18px;-webkit-text-stroke:0.05px currentColor;color:#111">正常</div>
<div class="t" style="left:1626px;top:581px;font-size:18.5px;transform:scaleY(1.05);transform-origin:0 0;color:#1e1e1e">2024-12-20</div>
<div class="t" style="left:1823px;top:581px;font-size:18.5px;transform:scaleY(1.05);transform-origin:0 0;color:#1e1e1e">1</div>
<div class="t" style="left:8px;top:617px;font-size:18.5px;transform:scaleY(1.05);transform-origin:0 0;color:#1e1e1e">10</div>
<div class="t" style="left:54px;top:617px;font-size:18.5px;transform:scaleY(1.05);transform-origin:0 0;color:#1e1e1e">KLJQ0058</div>
<div class="t" style="left:251px;top:617px;font-size:18.5px;transform:scaleY(1.05);transform-origin:0 0;color:#1e1e1e">2024-12-20</div>
<div class="t" style="left:447px;top:619px;font-size:18px;-webkit-text-stroke:0.05px currentColor;color:#111">大型排气扇</div>
<div class="t" style="left:840px;top:619px;font-size:18px;-webkit-text-stroke:0.05px currentColor;color:#111">机器设备</div>
<div class="t" style="left:1037px;top:619px;font-size:18px;-webkit-text-stroke:0.05px currentColor;color:#111">洗涤生产部</div>
<div class="t" style="left:1233px;top:619px;font-size:18px;-webkit-text-stroke:0.05px currentColor;color:#111">其他增加</div>
<div class="t" style="left:1430px;top:619px;font-size:18px;-webkit-text-stroke:0.05px currentColor;color:#111">正常</div>
<div class="t" style="left:1626px;top:617px;font-size:18.5px;transform:scaleY(1.05);transform-origin:0 0;color:#1e1e1e">2024-12-20</div>
<div class="t" style="left:1823px;top:617px;font-size:18.5px;transform:scaleY(1.05);transform-origin:0 0;color:#1e1e1e">1</div>
<div class="t" style="left:8px;top:653px;font-size:18.5px;transform:scaleY(1.05);transform-origin:0 0;color:#1e1e1e">11</div>
<div class="t" style="left:54px;top:653px;font-size:18.5px;transform:scaleY(1.05);transform-origin:0 0;color:#1e1e1e">KLJQ0059</div>
<div class="t" style="left:251px;top:653px;font-size:18.5px;transform:scaleY(1.05);transform-origin:0 0;color:#1e1e1e">2024-12-20</div>
<div class="t" style="left:447px;top:655px;font-size:18px;-webkit-text-stroke:0.05px currentColor;color:#111">大型排气扇</div>
<div class="t" style="left:840px;top:655px;font-size:18px;-webkit-text-stroke:0.05px currentColor;color:#111">机器设备</div>
<div class="t" style="left:1037px;top:655px;font-size:18px;-webkit-text-stroke:0.05px currentColor;color:#111">洗涤生产部</div>
<div class="t" style="left:1233px;top:655px;font-size:18px;-webkit-text-stroke:0.05px currentColor;color:#111">其他增加</div>
<div class="t" style="left:1430px;top:655px;font-size:18px;-webkit-text-stroke:0.05px currentColor;color:#111">正常</div>
<div class="t" style="left:1626px;top:653px;font-size:18.5px;transform:scaleY(1.05);transform-origin:0 0;color:#1e1e1e">2024-12-20</div>
<div class="t" style="left:1823px;top:653px;font-size:18.5px;transform:scaleY(1.05);transform-origin:0 0;color:#1e1e1e">1</div>
<div class="t" style="left:8px;top:689px;font-size:18.5px;transform:scaleY(1.05);transform-origin:0 0;color:#1e1e1e">12</div>
<div class="t" style="left:54px;top:689px;font-size:18.5px;transform:scaleY(1.05);transform-origin:0 0;color:#1e1e1e">KLJQ0060</div>
<div class="t" style="left:251px;top:689px;font-size:18.5px;transform:scaleY(1.05);transform-origin:0 0;color:#1e1e1e">2024-12-20</div>
<div class="t" style="left:447px;top:691px;font-size:18px;-webkit-text-stroke:0.05px currentColor;color:#111">大型排气扇</div>
<div class="t" style="left:840px;top:691px;font-size:18px;-webkit-text-stroke:0.05px currentColor;color:#111">机器设备</div>
<div class="t" style="left:1037px;top:691px;font-size:18px;-webkit-text-stroke:0.05px currentColor;color:#111">全溶解制片车间</div>
<div class="t" style="left:1233px;top:691px;font-size:18px;-webkit-text-stroke:0.05px currentColor;color:#111">其他增加</div>
<div class="t" style="left:1430px;top:691px;font-size:18px;-webkit-text-stroke:0.05px currentColor;color:#111">正常</div>
<div class="t" style="left:1626px;top:689px;font-size:18.5px;transform:scaleY(1.05);transform-origin:0 0;color:#1e1e1e">2024-12-20</div>
<div class="t" style="left:1823px;top:689px;font-size:18.5px;transform:scaleY(1.05);transform-origin:0 0;color:#1e1e1e">1</div>
<div class="t" style="left:8px;top:725px;font-size:18.5px;transform:scaleY(1.05);transform-origin:0 0;color:#1e1e1e">13</div>
<div class="t" style="left:54px;top:725px;font-size:18.5px;transform:scaleY(1.05);transform-origin:0 0;color:#1e1e1e">KLJQ0061</div>
<div class="t" style="left:251px;top:725px;font-size:18.5px;transform:scaleY(1.05);transform-origin:0 0;color:#1e1e1e">2024-12-20</div>
<div class="t" style="left:447px;top:727px;font-size:18px;-webkit-text-stroke:0.05px currentColor;color:#111">大型排气扇</div>
<div class="t" style="left:840px;top:727px;font-size:18px;-webkit-text-stroke:0.05px currentColor;color:#111">机器设备</div>
<div class="t" style="left:1037px;top:727px;font-size:18px;-webkit-text-stroke:0.05px currentColor;color:#111">洗涤生产部</div>
<div class="t" style="left:1233px;top:727px;font-size:18px;-webkit-text-stroke:0.05px currentColor;color:#111">其他增加</div>
<div class="t" style="left:1430px;top:727px;font-size:18px;-webkit-text-stroke:0.05px currentColor;color:#111">正常</div>
<div class="t" style="left:1626px;top:725px;font-size:18.5px;transform:scaleY(1.05);transform-origin:0 0;color:#1e1e1e">2024-12-20</div>
<div class="t" style="left:1823px;top:725px;font-size:18.5px;transform:scaleY(1.05);transform-origin:0 0;color:#1e1e1e">1</div>
<div class="t" style="left:8px;top:761px;font-size:18.5px;transform:scaleY(1.05);transform-origin:0 0;color:#1e1e1e">14</div>
<div class="t" style="left:54px;top:761px;font-size:18.5px;transform:scaleY(1.05);transform-origin:0 0;color:#1e1e1e">KLJQ0062</div>
<div class="t" style="left:251px;top:761px;font-size:18.5px;transform:scaleY(1.05);transform-origin:0 0;color:#1e1e1e">2024-12-20</div>
<div class="t" style="left:447px;top:763px;font-size:18px;-webkit-text-stroke:0.05px currentColor;color:#111">大型排气扇</div>
<div class="t" style="left:840px;top:763px;font-size:18px;-webkit-text-stroke:0.05px currentColor;color:#111">机器设备</div>
<div class="t" style="left:1037px;top:763px;font-size:18px;-webkit-text-stroke:0.05px currentColor;color:#111">洗涤生产部</div>
<div class="t" style="left:1233px;top:763px;font-size:18px;-webkit-text-stroke:0.05px currentColor;color:#111">其他增加</div>
<div class="t" style="left:1430px;top:763px;font-size:18px;-webkit-text-stroke:0.05px currentColor;color:#111">正常</div>
<div class="t" style="left:1626px;top:761px;font-size:18.5px;transform:scaleY(1.05);transform-origin:0 0;color:#1e1e1e">2024-12-20</div>
<div class="t" style="left:1823px;top:761px;font-size:18.5px;transform:scaleY(1.05);transform-origin:0 0;color:#1e1e1e">1</div>
<svg class="a" style="left:1575px;top:150px" width="180" height="140" viewBox="1575 150 180 140"><ellipse cx="1663" cy="220.5" rx="80.5" ry="62.5" stroke="#e02222" stroke-width="2.5" fill="none" transform="rotate(-3 1663 220.5)"/></svg>
</body></html>
